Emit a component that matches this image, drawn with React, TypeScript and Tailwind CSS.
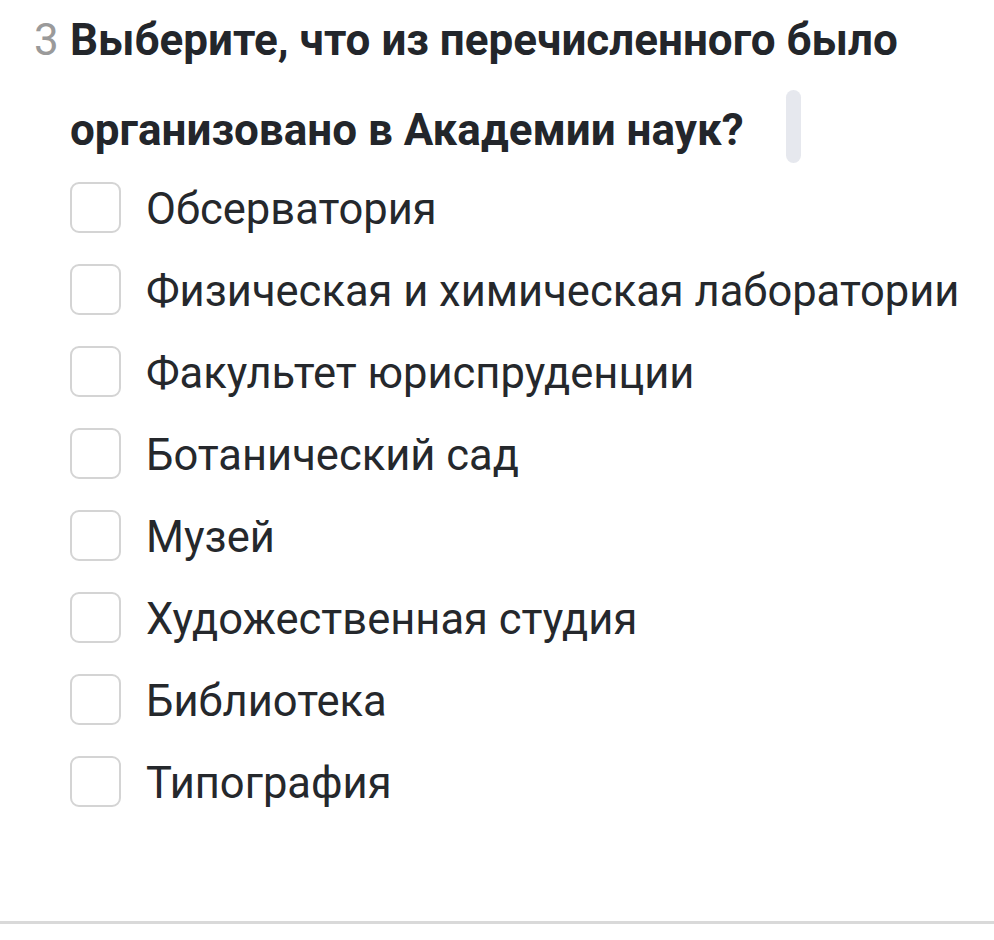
import React from 'react'

const options = [
  'Обсерватория',
  'Физическая и химическая лаборатории',
  'Факультет юриспруденции',
  'Ботанический сад',
  'Музей',
  'Художественная студия',
  'Библиотека',
  'Типография',
]

function App() {
  return (
    <div className="relative w-[994px] h-[940px] bg-white overflow-hidden font-['Roboto',sans-serif]">
      <div className="flex flex-row pl-[34px]">
        <span className="text-[44px] leading-[90px] mt-[-5px] text-[#9a9a9a] w-[36px] shrink-0">3</span>
        <h2 className="text-[44px] leading-[90px] mt-[-5px] font-bold text-[#23262b] w-[860px]">
          Выберите, что из перечисленного было организовано в Академии наук?
        </h2>
      </div>

      <div className="absolute left-[786px] top-[90px] w-[15px] h-[73px] rounded-full bg-[#e6e8ee]" />

      <div className="flex flex-col gap-[31px] pl-[70px] mt-[7px]">
        {options.map((o) => (
          <label key={o} className="flex flex-row items-center gap-[25px] h-[51px]">
            <span className="w-[51px] h-[51px] rounded-[9px] border-2 border-[#d4d4d4] bg-white shrink-0" />
            <span className="text-[43.5px] leading-[47px] pt-[4px] text-[#25282c]">{o}</span>
          </label>
        ))}
      </div>

      <div className="absolute left-0 right-0 top-[921px] h-[3px] bg-[#d9d9d9]" />
    </div>
  )
}

export default App
